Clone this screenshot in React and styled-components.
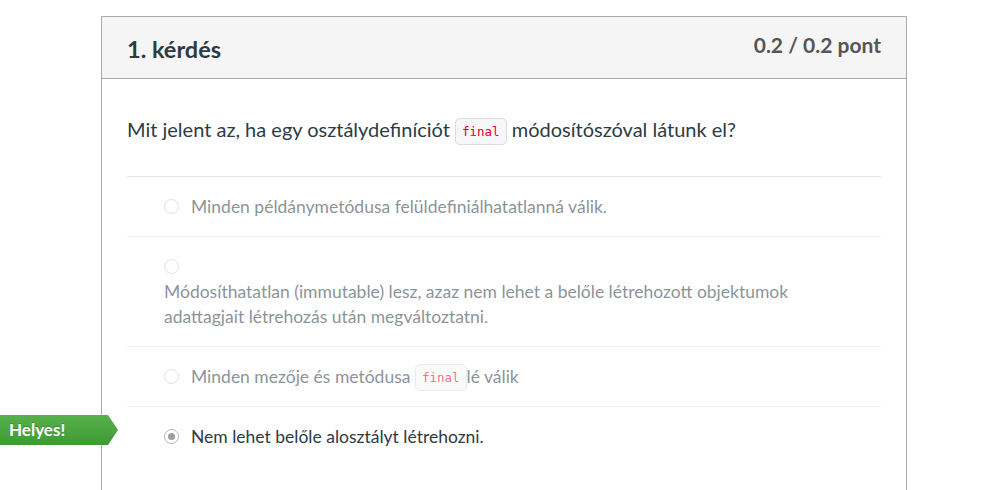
import React from 'react';
import styled, { createGlobalStyle } from 'styled-components';

const GlobalStyle = createGlobalStyle`
  body {
    margin: 0;
    background: #fff;
    font-family: Lato, "Noto Sans", sans-serif;
    color: #2d3b45;
  }
`;

const Page = styled.div`
  position: relative;
  padding: 16px 0 0 101px;
  height: 474px;
  overflow: hidden;
`;

const Card = styled.section`
  width: 804px;
  border: 1px solid #aaaaaa;
  border-bottom: none;
  min-height: 480px;
`;

const Header = styled.header`
  display: flex;
  justify-content: space-between;
  align-items: flex-start;
  height: 62px;
  padding: 0 25px 0 25px;
  background: #f5f5f5;
  border-bottom: 1px solid #aaaaaa;
  box-sizing: border-box;
`;

const Title = styled.h2`
  margin: 18px 0 0;
  font-size: 23.5px;
  font-weight: 700;
  line-height: 28px;
`;

const Points = styled.div`
  margin-top: 15px;
  font-size: 21px;
  font-weight: 700;
  line-height: 26px;
  color: #555;
`;

const Body = styled.div`
  padding: 35px 25px 0;
`;

const Question = styled.p`
  margin: 0 0 32px;
  font-size: 20px;
  line-height: 30px;
`;

const Code = styled.code`
  font-family: "DejaVu Sans Mono", "Liberation Mono", monospace;
  font-size: 12.5px;
  line-height: 12px;
  color: #e0001b;
  background: #f7f7f9;
  border: 1px solid #dcdcdc;
  border-radius: 5px;
  padding: 5px 6px;
  vertical-align: 1px;
`;

const Answers = styled.div`
  border-top: 1px solid #e6e6e6;
`;

const Answer = styled.div`
  position: relative;
  padding: 17px 0 17px 37px;
  border-bottom: ${(p) => (p.last ? 'none' : '1px solid #e6e6e6')};
  font-size: 17.5px;
  line-height: 25px;
  color: #2d3b45;
  opacity: ${(p) => (p.selected ? 1 : 0.55)};
  display: ${(p) => (p.stacked ? 'block' : 'flex')};
  align-items: center;
`;

const Radio = styled.span`
  display: inline-block;
  box-sizing: border-box;
  width: 15px;
  height: 15px;
  border-radius: 50%;
  border: 1.5px solid ${(p) => (p.checked ? '#b4b4b8' : '#c4c8cc')};
  background: #fff;
  margin-right: 12px;
  flex-shrink: 0;
  position: relative;
  vertical-align: -2px;
  &::after {
    content: '';
    display: ${(p) => (p.checked ? 'block' : 'none')};
    position: absolute;
    left: 2.5px;
    top: 2.5px;
    width: 7px;
    height: 7px;
    border-radius: 50%;
    background: #9c9ca4;
  }
`;

const RadioLine = styled.div`
  height: 25px;
  display: flex;
  align-items: center;
`;

const AnswerText = styled.div``;

const CorrectTag = styled.div`
  position: absolute;
  left: -127px;
  top: 8px;
  width: 118px;
  height: 30px;
  box-sizing: border-box;
  padding-left: 9px;
  background: linear-gradient(#57b04b, #3f9a35);
  clip-path: polygon(0 0, 108px 0, 118px 50%, 108px 100%, 0 100%);
  color: #fff;
  font-weight: 700;
  font-size: 17px;
  line-height: 29px;
  text-shadow: 0 -1px 0 rgba(0, 0, 0, 0.2);
`;

export default function App() {
  return (
    <Page>
      <GlobalStyle />
      <Card>
        <Header>
          <Title>1. kérdés</Title>
          <Points>0.2 / 0.2 pont</Points>
        </Header>
        <Body>
          <Question>
            Mit jelent az, ha egy osztálydefiníciót <Code>final</Code> módosítószóval látunk el?
          </Question>
          <Answers>
            <Answer>
              <Radio />
              <AnswerText>Minden példánymetódusa felüldefiniálhatatlanná válik.</AnswerText>
            </Answer>
            <Answer stacked>
              <RadioLine>
                <Radio />
              </RadioLine>
              <AnswerText>
                Módosíthatatlan (immutable) lesz, azaz nem lehet a belőle létrehozott objektumok
                <br />
                adattagjait létrehozás után megváltoztatni.
              </AnswerText>
            </Answer>
            <Answer>
              <Radio />
              <AnswerText>
                Minden mezője és metódusa <Code>final</Code>lé válik
              </AnswerText>
            </Answer>
            <Answer selected last>
              <CorrectTag>Helyes!</CorrectTag>
              <Radio checked />
              <AnswerText>Nem lehet belőle alosztályt létrehozni.</AnswerText>
            </Answer>
          </Answers>
        </Body>
      </Card>
    </Page>
  );
}
